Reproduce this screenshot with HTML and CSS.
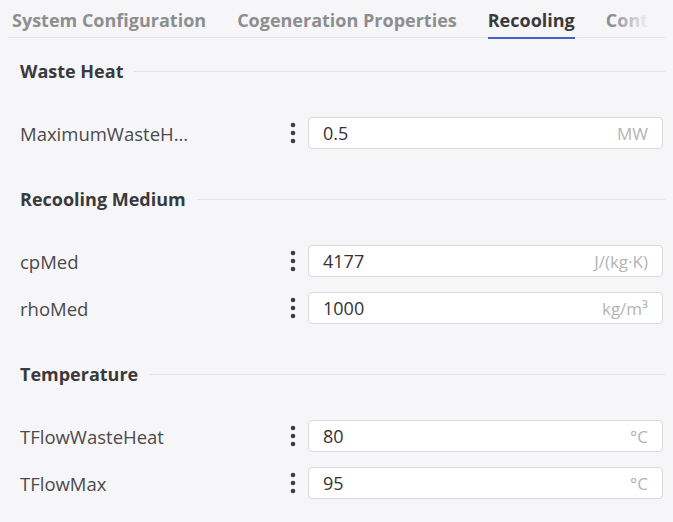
FILE: index.html
```html
<!DOCTYPE html>
<html lang="en">

<head>
    <meta charset="UTF-8">
    <meta name="viewport" content="width=device-width, initial-scale=1.0">
    <title>Recooling</title>
    <link rel="stylesheet" href="styles.css">
</head>

<body>
    <nav class="tabs">
        <span class="tab">System Configuration</span>
        <span class="tab">Cogeneration Properties</span>
        <span class="tab active">Recooling</span>
        <span class="tab">Control Strategy</span>
    </nav>

    <main class="panel">
        <section class="group">
            <h2 class="group-title"><span>Waste Heat</span></h2>
            <div class="field">
                <label class="field-label" for="maxWasteHeat">MaximumWasteHeat</label>
                <button class="kebab" type="button" aria-label="Options">
                    <svg width="6" height="22" viewBox="0 0 6 22"><circle cx="3" cy="3" r="2.3"/><circle cx="3" cy="11" r="2.3"/><circle cx="3" cy="19" r="2.3"/></svg>
                </button>
                <div class="input-box">
                    <input id="maxWasteHeat" type="text" value="0.5">
                    <span class="unit">MW</span>
                </div>
            </div>
        </section>

        <section class="group">
            <h2 class="group-title"><span>Recooling Medium</span></h2>
            <div class="field">
                <label class="field-label" for="cpMed">cpMed</label>
                <button class="kebab" type="button" aria-label="Options">
                    <svg width="6" height="22" viewBox="0 0 6 22"><circle cx="3" cy="3" r="2.3"/><circle cx="3" cy="11" r="2.3"/><circle cx="3" cy="19" r="2.3"/></svg>
                </button>
                <div class="input-box">
                    <input id="cpMed" type="text" value="4177">
                    <span class="unit">J/(kg·K)</span>
                </div>
            </div>
            <div class="field">
                <label class="field-label" for="rhoMed">rhoMed</label>
                <button class="kebab" type="button" aria-label="Options">
                    <svg width="6" height="22" viewBox="0 0 6 22"><circle cx="3" cy="3" r="2.3"/><circle cx="3" cy="11" r="2.3"/><circle cx="3" cy="19" r="2.3"/></svg>
                </button>
                <div class="input-box">
                    <input id="rhoMed" type="text" value="1000">
                    <span class="unit">kg/m³</span>
                </div>
            </div>
        </section>

        <section class="group">
            <h2 class="group-title"><span>Temperature</span></h2>
            <div class="field">
                <label class="field-label" for="tFlowWasteHeat">TFlowWasteHeat</label>
                <button class="kebab" type="button" aria-label="Options">
                    <svg width="6" height="22" viewBox="0 0 6 22"><circle cx="3" cy="3" r="2.3"/><circle cx="3" cy="11" r="2.3"/><circle cx="3" cy="19" r="2.3"/></svg>
                </button>
                <div class="input-box">
                    <input id="tFlowWasteHeat" type="text" value="80">
                    <span class="unit">°C</span>
                </div>
            </div>
            <div class="field">
                <label class="field-label" for="tFlowMax">TFlowMax</label>
                <button class="kebab" type="button" aria-label="Options">
                    <svg width="6" height="22" viewBox="0 0 6 22"><circle cx="3" cy="3" r="2.3"/><circle cx="3" cy="11" r="2.3"/><circle cx="3" cy="19" r="2.3"/></svg>
                </button>
                <div class="input-box">
                    <input id="tFlowMax" type="text" value="95">
                    <span class="unit">°C</span>
                </div>
            </div>
        </section>
    </main>
</body>

</html>
```

FILE: styles.css
```css
:root {
    --bg-color: #f6f6f8;
    --text-color: #3a3a3c;
    --muted-text: #8e8e90;
    --line-color: #e4e4e7;
    --input-border: #dadadd;
    --unit-color: #b4b4b6;
    --accent: #4562c6;
}

body {
    font-family: "Open Sans", "Noto Sans", sans-serif;
    margin: 0;
    background-color: var(--bg-color);
    color: var(--text-color);
    font-size: 18.5px;
}

/* tab strip along the top, fades out on the right */
.tabs {
    position: relative;
    display: flex;
    align-items: flex-end;
    gap: 31px;
    margin: 0 8px;
    padding-left: 4px;
    background: linear-gradient(var(--line-color), var(--line-color)) 0 37px / 100% 1px no-repeat;
    overflow: hidden;
    white-space: nowrap;
}

.tabs::after {
    content: "";
    position: absolute;
    top: 0;
    right: 0;
    bottom: 2px;
    width: 52px;
    background: linear-gradient(to right, rgba(246, 246, 248, 0), var(--bg-color) 70%);
}

.tab {
    flex: none;
    padding: 8px 0 5px;
    line-height: 24px;
    font-size: 18px;
    font-weight: 700;
    color: var(--muted-text);
    border-bottom: 2px solid transparent;
}

.tab.active {
    color: var(--text-color);
    border-bottom-color: var(--accent);
}

.panel {
    padding: 20px 8px 0 20px;
}

.group {
    margin-bottom: 38px;
}

.group-title {
    display: flex;
    align-items: center;
    gap: 11px;
    margin: 0 0 34px;
    font-size: 18px;
    line-height: 24px;
    font-weight: 700;
}

.group-title::after {
    content: "";
    flex: 1;
    height: 1px;
    background-color: var(--line-color);
}

.field {
    display: grid;
    grid-template-columns: 1fr 20px 355px;
    column-gap: 5px;
    align-items: center;
    padding-right: 2px;
    margin-bottom: 15px;
}

.field-label {
    max-width: 178px;
    overflow: hidden;
    white-space: nowrap;
    text-overflow: ellipsis;
    color: #4a4a4c;
}

.kebab {
    display: flex;
    justify-content: center;
    padding: 0;
    border: none;
    background: none;
    cursor: pointer;
    fill: #3c3c3e;
}

.input-box {
    display: flex;
    align-items: center;
    height: 32px;
    box-sizing: border-box;
    padding: 0 14px;
    border: 1px solid var(--input-border);
    border-radius: 4px;
    background-color: #fff;
}

.input-box input {
    flex: 1;
    min-width: 0;
    padding: 0;
    border: none;
    outline: none;
    background: none;
    font: inherit;
    font-size: 18px;
    color: #333;
}

.unit {
    color: var(--unit-color);
    font-size: 17px;
}
```
